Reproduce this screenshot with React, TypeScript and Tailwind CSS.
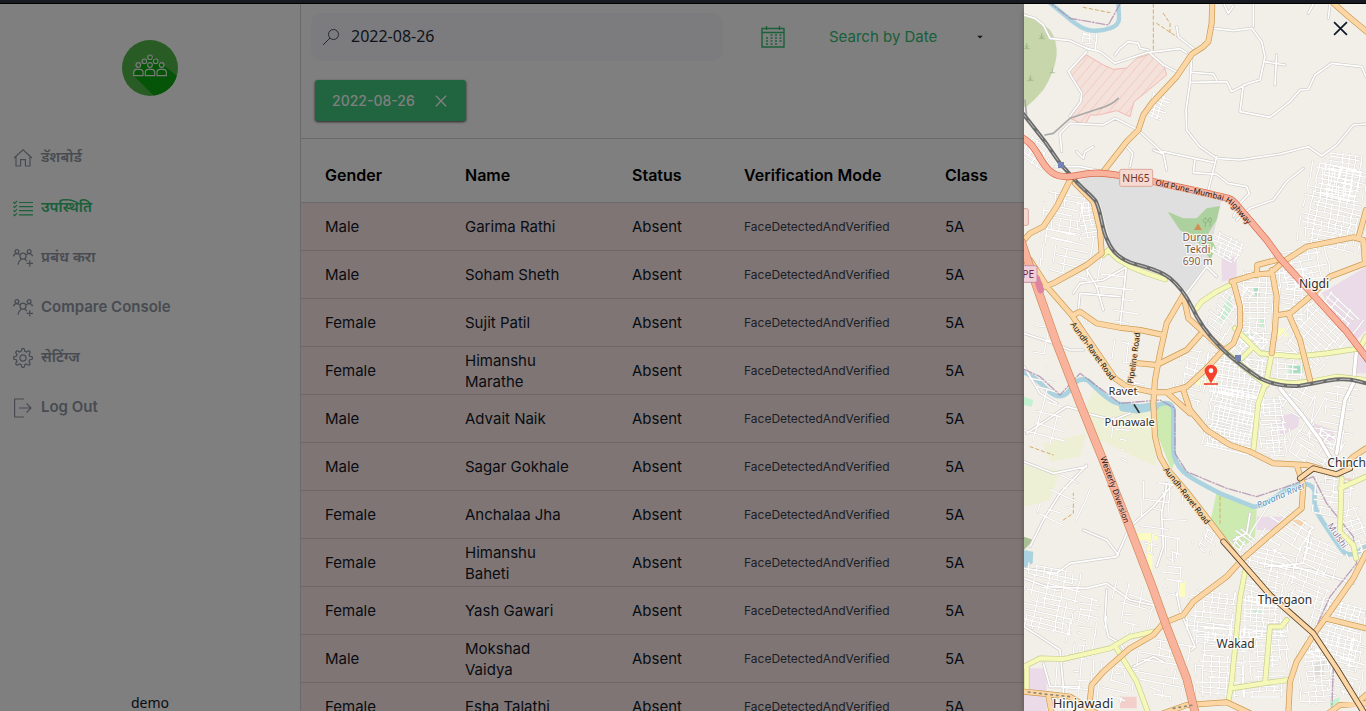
import React from "react";
import { SlSettings } from "react-icons/sl";

type IconProps = { className?: string };

function HomeIcon({ className }: IconProps) {
  return (
    <svg viewBox="0 0 20 20" fill="none" stroke="currentColor" strokeWidth="1.2" className={className} aria-hidden="true">
      <path d="M1 10 10 1.8 19 10M3 8.5V18h4.6v-6.4h4.8V18H17V8.5" />
    </svg>
  );
}

function ListIcon({ className }: IconProps) {
  return (
    <svg viewBox="0 0 20 20" fill="none" stroke="currentColor" strokeWidth="1.2" className={className} aria-hidden="true">
      <path d="M6 4.5h14M6 8.6h14M6 12.7h14M6 16.8h14" />
      <path d="m.4 4.2 1.2 1.2L4 3M.4 8.3l1.2 1.2L4 7.1M.4 12.4l1.2 1.2L4 11.2M.4 16.5l1.2 1.2L4 15.3" />
    </svg>
  );
}

function PeopleIcon({ className }: IconProps) {
  return (
    <svg viewBox="0 0 20 20" fill="none" stroke="currentColor" strokeWidth="1.3" className={className} aria-hidden="true">
      <circle cx="3.9" cy="3.6" r="1.9" />
      <circle cx="16.1" cy="3.6" r="1.9" />
      <circle cx="10" cy="8.2" r="3" />
      <path d="M.5 8.4C.7 6.5 2 5.6 3.9 5.6c1.100 0 2 .3 2.800 1.300M19.500 8.400c-.2-1.900-1.500-2.800-3.400-2.800-1.100 0-2 .3-2.800 1.300M5 16.600c.2-2.800 1.500-4.200 3.200-5.400M11.800 11.200c.9.600 1.500 1.100 2 1.900M16.800 12.200v6.400M13.600 15.400H20" />
    </svg>
  );
}

function LogoutIcon({ className }: IconProps) {
  return (
    <svg viewBox="0 0 20 20" fill="none" stroke="currentColor" strokeWidth="1.2" className={className} aria-hidden="true">
      <path d="M11 1H1.600v18H11M6 10h12M13.500 5.500 18 10l-4.500 4.500" />
    </svg>
  );
}

function CalendarIcon({ className }: IconProps) {
  return (
    <svg viewBox="0 0 24 22" fill="none" stroke="currentColor" strokeWidth="1.400" className={className} aria-hidden="true">
      <path d="M1 2.500h22V21H1zM1 6.500h22M5.500 0v4M18.500 0v4" />
      <path strokeWidth="1.600" strokeDasharray="2 2.500" d="M9.500 9h12M5 12h16M5 15h16M5 18h12" />
    </svg>
  );
}

function CloseIcon({ className }: IconProps) {
  return (
    <svg viewBox="0 0 14 14" fill="none" stroke="currentColor" strokeWidth="1.600" className={className} aria-hidden="true">
      <path d="m1 1 12 12M13 1 1 13" />
    </svg>
  );
}

function Logo({ className }: IconProps) {
  return (
    <svg viewBox="0 0 168 168" className={className} role="img" aria-label="Attendance">
      <defs>
        <clipPath id="logo-disc">
          <circle cx="84" cy="84" r="84" />
        </clipPath>
      </defs>
      <g clipPath="url(#logo-disc)">
        <rect width="168" height="168" fill="#52b848" />
        <path d="M34 106 100 172H180V120L90 48 50 78z" fill="#0ca80e" />
        <g fill="none" stroke="#f4f4f4" strokeWidth="3.500">
          <circle cx="84" cy="52" r="7" />
          <circle cx="67" cy="64" r="7" />
          <circle cx="101" cy="64" r="7" />
          <circle cx="49" cy="75" r="7" />
          <circle cx="84" cy="75" r="7" />
          <circle cx="119" cy="75" r="7" />
          <path d="M35 107V97q0-9 9-9h10q9 0 9 9v10zM70 107V97q0-9 9-9h10q9 0 9 9v10zM105 107V97q0-9 9-9h10q9 0 9 9v10z" />
        </g>
      </g>
    </svg>
  );
}

/* ---------- Map ---------- */

type Patch = [x: number, y: number, w: number, h: number, angle: number, step: number, fill: number];

const patches: Patch[] = [
  [945, 620, 190, 240, 12, 14, 0.8],
  [960, 530, 110, 140, 8, 12, 0.8],
  [415, 320, 60, 70, 20, 11, 0.8],
  [205, 125, 40, 50, 5, 13, 0.7],
  [130, 650, 130, 140, 10, 19, 0.6],
  [205, 660, 70, 110, -8, 13, 0.7],
  [50, 460, 80, 70, 35, 13, 0.7],
  [155, 760, 180, 120, 12, 24, 0.5],
  [620, 740, 110, 60, 25, 12, 0.7],
  [850, 800, 180, 110, -12, 18, 0.7],
  [610, 935, 100, 200, 35, 15, 0.7],
  [710, 930, 90, 230, 2, 15, 0.8],
  [820, 880, 90, 150, 3, 15, 0.7],
  [905, 990, 160, 210, 42, 17, 0.8],
  [690, 1040, 120, 90, 40, 15, 0.7],
  [800, 1110, 110, 110, 3, 16, 0.7],
  [510, 1130, 90, 160, 12, 18, 0.6],
  [650, 1130, 190, 120, 8, 11, 0.85],
  [640, 1260, 160, 180, 12, 10, 0.85],
  [760, 1280, 90, 170, -6, 12, 0.7],
  [840, 1200, 140, 90, 30, 22, 0.6],
  [940, 1250, 130, 190, 8, 22, 0.5],
  [890, 1340, 140, 110, 30, 18, 0.5],
  [80, 1250, 150, 160, 15, 34, 0.45],
  [80, 1060, 140, 160, 10, 40, 0.3],
  [280, 900, 160, 150, 5, 34, 0.3],
  [330, 1090, 120, 120, 10, 28, 0.4],
  [330, 1320, 120, 120, 8, 30, 0.4],
  [130, 1500, 120, 130, 25, 26, 0.4],
  [430, 1560, 140, 220, 5, 26, 0.4],
  [560, 1620, 70, 60, 30, 14, 0.6],
  [665, 1620, 70, 60, 35, 14, 0.7],
  [90, 1800, 170, 190, 12, 15, 0.65],
  [190, 1880, 90, 180, 10, 18, 0.5],
  [330, 1830, 130, 150, 15, 28, 0.4],
  [460, 1720, 90, 130, 8, 21, 0.4],
  [580, 1850, 160, 150, 5, 15, 0.7],
  [740, 1730, 170, 170, 12, 15, 0.75],
  [880, 1720, 130, 200, 20, 16, 0.75],
  [790, 1600, 170, 130, 32, 20, 0.5],
  [730, 1850, 150, 120, 3, 12, 0.8],
  [600, 1980, 150, 220, 3, 16, 0.7],
  [740, 1990, 150, 200, -3, 15, 0.7],
  [950, 1890, 170, 170, 15, 13, 0.8],
  [890, 2030, 110, 160, -5, 15, 0.7],
  [990, 2000, 110, 170, 12, 16, 0.6],
  [940, 1480, 120, 130, 8, 18, 0.6],
  [1000, 1600, 90, 150, -20, 16, 0.6],
  [430, 2010, 170, 170, 10, 20, 0.5],
  [300, 2050, 130, 110, 8, 24, 0.5],
  [160, 2030, 110, 130, 5, 24, 0.4],
];

/** Builds a jittered street grid as one path, repeatable for a given patch. */
function streetGrid([cx, cy, w, h, angle, step, fill]: Patch): string {
  let seed = (cx * 73 + cy * 19 + step) % 2147483647;
  const rnd = () => {
    seed = (seed * 16807) % 2147483647;
    return seed / 2147483647;
  };
  const a = (angle * Math.PI) / 180;
  const pt = (x: number, y: number) =>
    `${Math.round(cx + x * Math.cos(a) - y * Math.sin(a))} ${Math.round(cy + x * Math.sin(a) + y * Math.cos(a))}`;
  let d = "";
  for (let y = -h / 2; y <= h / 2; y += step) {
    const from = -w / 2 + rnd() * w * (1 - fill) * 1.1;
    const to = w / 2 - rnd() * w * (1 - fill) * 1.1;
    d += `M${pt(from, y + rnd() * 5)}L${pt(to, y + rnd() * 9)}`;
  }
  for (let x = -w / 2; x <= w / 2; x += step * 1.5) {
    for (let y = -h / 2; y < h / 2; y += step * 2) {
      if (rnd() < fill) d += `M${pt(x + rnd() * 4, y)}L${pt(x + rnd() * 7, Math.min(h / 2, y + step * 2))}`;
    }
  }
  return d;
}

const streets = patches.map(streetGrid).join("");

const lanes = [
  "M12 45 45 55 70 75 90 115 150 122 200 145 240 155 285 190 380 158 480 146 500 158",
  "M285 165 300 145 325 125 355 130 360 145 385 150M390 160 430 195 475 218M470 80 475 110 520 145",
  "M200 155 145 215 185 280 182 305 150 348M125 455 120 400 150 370 250 375 285 355 355 390 430 460 440 510",
  "M515 170 510 250 498 330 500 390 540 440 590 475 660 480 780 462 865 440 905 468 950 435 1000 375 1038 372",
  "M580 85 640 92 695 85 725 125 735 170 720 240 685 250 635 275 620 245 515 247M515 217 580 222 590 240M700 12 700 80M612 12 625 40 640 18",
  "M670 255 660 335 750 352 810 305 840 270 865 268 885 225 935 190 1025 200 1038 230",
  "M735 185 795 195M770 165 765 255M430 455 580 487M590 470 565 570M525 480 520 518 590 523 625 550 680 560 688 580 660 610 640 650",
  "M850 505 800 545 760 600 690 625 650 660M865 40 880 12M930 12 925 55",
  "M105 500 180 500 250 515M320 440 338 460 330 500M170 455 190 475 195 455 220 440M400 450 430 462",
  "M320 790 300 980M160 880 180 850 250 840 320 800M175 930 180 880 300 890M200 810 230 860 250 930M500 880 560 800 590 830",
  "M12 1000 100 1030 150 1050 190 1050M12 1100 60 1180 110 1210M20 1300 140 1220 200 1235M200 1240 280 1260 330 1240",
  "M200 1395 120 1480 70 1560 30 1640M12 1705 110 1720 150 1690 290 1670 330 1580 400 1520 470 1440",
  "M295 1665 260 1620 190 1590M440 1450 425 1540 430 1640 410 1700M12 1735 80 1760 200 1765 260 1750 330 1800 420 1820",
  "M12 1880 60 1910 120 1950 130 2060 130 2130M260 1770 255 1860 265 1910 300 1930 320 1960M470 1780 480 1830 525 1940 515 1950",
  "M690 1540 680 1600 640 1620M870 1590 850 1690 740 1700M720 1690 870 1710 1000 1750",
  "M12 1385 100 1420 200 1400M340 2000 400 1970 430 1985M70 1990 90 2060 180 2060",
];

const mainLanes = ["M780 1165 850 1250 900 1320 935 1380", "M1010 1045 1000 1150 975 1200 950 1360"];

const yellowRoads = [
  "M250 765 265 750 290 775 330 800 380 820 435 838",
  "M530 925 545 905 590 875 640 850",
  "M605 1045 670 1100 740 1155",
  "M645 985 720 1060 830 1070 920 1060 1020 1045 1038 1010",
  "M755 1060 740 1140 715 1210 700 1350",
  "M740 1140 810 1150 870 1145 950 1130 1038 1140",
  "M665 1075 700 1040",
  "M12 2000 60 1975 130 1977 270 1945 330 1910 400 1895M20 2000 20 2075",
  "M290 1945 350 2045 385 2140",
  "M675 1715 660 1795 645 1945 635 2045 625 2105",
  "M635 2065 730 2050 805 2040M735 2050 750 1880 785 1880 800 1860",
  "M965 1435 960 1595 1000 1635 1008 1675M960 1465 1038 1430",
];

const orangeRoads = [
  "M577 0 575 70 565 125 550 140 515 163 470 230 395 310 370 345 355 390 320 425 250 515",
  "M930 0 980 45 1040 95",
  "M150 540 110 620 70 680 30 700 12 720",
  "M165 550 220 605 240 690 245 760 200 795 100 850 75 860",
  "M30 780 85 865 155 945 285 1135 320 1160 400 1177 440 1177 500 1160 560 1105 610 1050",
  "M160 945 180 935 230 970 300 983 360 990 430 1005",
  "M355 1090 410 1095 500 1050 540 1005",
  "M490 885 440 970 420 1060 405 1140 400 1210 405 1310 420 1370 440 1405 500 1475 570 1565 650 1670 750 1785 880 1900 950 2005 1030 2135",
  "M490 885 505 955 610 1050",
  "M440 1177 510 1240M490 1170 510 1230 560 1290 630 1335 690 1355 760 1390 860 1395 900 1405",
  "M640 845 660 920 660 980 640 1030 620 1045",
  "M635 845 700 825 750 820 790 785 860 740 1000 712 1030 720 1035 790 930 830 870 890 810 940 775 945M710 825 712 795 770 780M1015 715 1038 630",
  "M755 810 770 890 765 990 755 1060",
  "M805 940 840 1020 870 1140",
  "M830 1395 850 1455 845 1525 750 1605 670 1675 620 1730 520 1805 490 1845 430 1870 400 1905 330 1945 250 2015 215 2055 205 2140",
  "M1038 1660 1000 1735 930 1835 880 1905 830 1985 810 2045 805 2140",
  "M915 1855 1038 1885",
  "M12 2075 80 2082 150 2090 230 2140M85 2085 95 2140M430 2140 500 2115 620 2107 690 2140",
  "M840 1435 880 1405 950 1423 990 1405M1038 1345 1000 1370 970 1400",
  "M925 2140 960 2115 1038 2110M1010 2110 1038 2085",
];

const darkEdged = "M610 1625 650 1670 750 1785 880 1900 950 2005 1030 2135M840 1435 880 1405 950 1423 990 1405";

const railway =
  "M0 330 20 355 75 425 120 490 165 540C190 570 215 585 228 605C245 640 245 690 262 720C275 755 300 775 330 787C370 800 420 810 450 835C480 860 500 890 515 920C540 975 570 1010 600 1040C620 1062 680 1110 720 1135C760 1155 800 1160 840 1157C880 1152 920 1140 960 1138S1010 1144 1040 1150";
const nationalHighway =
  "M0 410C40 430 45 450 65 482S105 532 145 530C180 527 200 519 230 519C290 522 350 535 400 545C480 562 560 578 625 595Q640 600 655 620L740 720 780 775 880 885 980 995 1045 1080";
const expressway = "M4 725 50 860 110 1030 180 1210 255 1395 330 1585 395 1755 438 1875 500 2035 527 2145";
const river =
  "M0 1115C40 1122 60 1150 85 1172S130 1195 150 1170C165 1145 180 1130 205 1142C230 1165 250 1190 280 1205S390 1225 430 1210C462 1205 462 1230 460 1260V1350C462 1380 475 1400 490 1415S560 1460 600 1480L700 1520C730 1525 780 1475 810 1465Q870 1435 885 1475C880 1510 885 1530 905 1560S950 1630 970 1655C990 1675 1020 1655 1038 1635";
const boundary =
  "M80 0 150 55 265 75 300 12M12 1108 60 1130 120 1185 180 1120 300 1210 420 1200 465 1225 465 1360 500 1415 620 1465 710 1490 800 1460 880 1430 920 1510 1000 1610 1010 1690 930 1790 880 1900 940 2000 935 2140";

function Roads({ paths, casing, fill, width }: { paths: string[]; casing: string; fill: string; width: number }) {
  const d = paths.join("");
  return (
    <g>
      <path d={d} stroke={casing} strokeWidth={width + 4} />
      <path d={d} stroke={fill} strokeWidth={width} />
    </g>
  );
}

function MapView() {
  return (
    <svg viewBox="12 12 1026 2121" preserveAspectRatio="xMinYMin slice" className="block size-full bg-[#f2efe9]" role="img" aria-label="Map of Nigdi, Ravet and Wakad">
      <defs>
        <pattern id="hatch" width="22" height="22" patternUnits="userSpaceOnUse" patternTransform="rotate(40)">
          <rect width="22" height="22" fill="#f3e1da" />
          <path d="M0 0V22" stroke="#f4c4be" strokeWidth="4" />
        </pattern>
        <path id="highway-label" d="M405 555 520 580 600 599Q625 605 640 624L700 693 760 765" />
      </defs>
      <rect x="12" y="12" width="1026" height="2121" fill="#f2efe9" />

      <g>
        <path d="M12 50Q50 50 90 90Q112 120 110 165Q105 215 70 270Q45 300 20 320H12z" fill="#c8d7ab" />
        <path d="M200 165 250 195 280 208 320 204 350 175 390 162 430 190 440 225 380 275 342 305 330 350 290 332 235 345 210 345 195 375 150 355 185 305 182 270 145 215z" fill="url(#hatch)" stroke="#f4b9b4" strokeWidth="3" />
        <path d="M170 545 230 520 400 545 605 600 560 790 500 875 450 830 330 785 275 740 240 610z" fill="#dfdfdf" />
        <path d="M443 635 490 655 530 655 560 625 600 618 590 660 565 700 588 745 570 780 550 740 510 710 480 690z" fill="#add19e" />
        <path d="M605 770H650V835L605 845z M905 880 1038 800V990L1000 1030z M780 1245 840 1240 835 1280 780 1310z M870 1265 940 1290 945 1320 910 1325z M1010 1060H1038V1120H1010z M12 2005H80V2140H12z M710 1550H790L760 1590 710 1590z" fill="#ebdbe8" />
        <path d="M225 1160 280 1210 380 1225 400 1260 410 1400 320 1360 200 1300 190 1240z M12 1395 120 1410 90 1500 12 1520z M70 1330 200 1300 180 1370 90 1385z" fill="#eef0d5" />
        <path d="M410 1220 460 1210 465 1380 455 1410 410 1300z M590 1475 710 1530 705 1610 660 1650 570 1570z" fill="#cdebb0" />
        <path d="M595 945 635 880 635 930 620 955 600 965z M700 860H720V890H700z M805 1095H850V1120H805z M720 955H735V980H720z M12 1190 40 1200 35 1220 12 1215z M700 1830 725 1828 720 1845 700 1845z M930 2105 960 2090 955 2110 930 2120z M660 985 700 1005 690 1025z" fill="#c3f2d1" />
        <path d="M703 862H718V885H703z M812 1098H840V1118H812z" fill="#a4dcc4" />
        <path d="M530 1130 570 1110 600 1090 590 1160 530 1155z M770 985H800V1010H770z M345 1600H412V1620H345z M385 1620H397V1710H380z M475 1745H495V1790H475z" fill="#fcfbc0" />
        <path d="M12 1650 40 1655 38 1690 12 1705z" fill="#aad3df" />
        <path d="M12 1610 40 1620 12 1650z" fill="#a9bf95" />
        <path d="M820 1560H855V1577H820z" fill="#f7d3ac" />
        <path d="M300 2090H350V2125H300z M970 1435H995V1450H970z" fill="#f3cfcb" />
        <path d="M885 1990 915 1980 910 2030 885 2035z" fill="#dfdcdc" />
      </g>

      <g fill="none" strokeLinejoin="round" strokeLinecap="round">
        <path d="M85 5 140 50Q185 90 215 92T270 85Q300 75 297 50L295 12" stroke="#aad3df" strokeWidth="13" />
        <path d={river} stroke="#aad3df" strokeWidth="14" />
        <path d="M310 1222 350 1228 405 1218" stroke="#aad3df" strokeWidth="26" />
        <path d="M400 12 400 150M410 70 470 110M430 40 450 70 450 100M190 22 270 38M600 1490 600 1570M130 1560 160 1540 160 1480M30 1340 100 1365" stroke="#d3ad6a" strokeWidth="3" strokeDasharray="10 8" />
        <path d={streets} stroke="#d3d0cc" strokeWidth="6" />
        <Roads paths={lanes} casing="#cfccc8" fill="#ffffff" width={5} />
        <path d={streets} stroke="#ffffff" strokeWidth="4" />
        <Roads paths={mainLanes} casing="#c9c6c2" fill="#ffffff" width={10} />
        <path d={boundary} stroke="#a887a9" strokeOpacity="0.75" strokeWidth="4" strokeDasharray="26 6 4 6" />
        <path d="M15 300 20 350M75 405 100 400 150 355 240 325Q275 315 295 295" stroke="#a9a9a9" strokeWidth="5" />
        <Roads paths={yellowRoads} casing="#c6cf8c" fill="#f5f8b9" width={13} />
        <Roads paths={orangeRoads} casing="#c99a52" fill="#fcd6a4" width={14} />
        <path d={railway} stroke="#6c6c6c" strokeWidth="12" />
        <path d={railway} stroke="#e9e9e9" strokeWidth="2" strokeDasharray="30 10" strokeLinecap="butt" />
        <Roads paths={[nationalHighway]} casing="#d9694c" fill="#f9b29c" width={17} />
        <Roads paths={[expressway]} casing="#d08a55" fill="#f9b29c" width={22} />
        <path d={darkEdged} stroke="#5d4a36" strokeWidth="18" />
        <path d={darkEdged} stroke="#fcd6a4" strokeWidth="13" />
        <path d="M25 2076 80 2083 150 2090M460 2125 520 2115" stroke="#8f8878" strokeWidth="5" strokeDasharray="5 12" />
        <path d="M343 1215 357 1237" stroke="#333333" strokeWidth="5" />
        <path d="M50 835 62 870" stroke="#e083a0" strokeWidth="20" />
        <path d="M56 116H74M60 108 65 116 65 100 65 116 71 108M11 146H29M15 138 20 146 20 130 20 146 26 138M22 242H40M26 234 31 242 31 226 31 242 37 234M90 218H104M97 216V204" stroke="#9cb384" strokeWidth="2" />
        <path d="M556 655a6 7 0 1 0 .1 0zM556 669V680M570 654a5 6 0 1 0 .1 0zM570 667V678" stroke="#7fa870" strokeWidth="2" />
      </g>

      <path d="M534 670 546 690H522z" fill="#d08f55" />
      <path d="M114 486h18v18h-18zM645 1065h18v18h-18z" fill="#7381b5" />

      <g stroke="#dba79a" strokeWidth="3" fill="#f6d9d1">
        <rect x="299" y="508" width="99" height="51" rx="5" />
        <rect x="-10" y="626" width="35" height="50" rx="5" />
        <rect x="-20" y="797" width="71" height="50" rx="5" fill="#efd0d8" stroke="#c98ea0" />
      </g>

      <g fontFamily="'Noto Sans', sans-serif" stroke="#ffffff" strokeOpacity="0.8" paintOrder="stroke" strokeLinejoin="round" textAnchor="middle" fill="#2f2f2f">
        <g stroke="none" fontSize="31">
          <text x="348" y="545" fill="#703527">NH65</text>
          <text x="25" y="833" fill="#7a1f3d">PE</text>
        </g>
        <g fontSize="31" strokeWidth="7" fill="#8a5a3c">
          <text x="533" y="723">Durga</text>
          <text x="533" y="759">Tekdi</text>
          <text x="533" y="795">690 m</text>
        </g>
        <g fontSize="36" strokeWidth="8">
          <text x="882" y="864">Nigdi</text>
          <text x="795" y="1813">Thergaon</text>
          <text x="647" y="1943">Wakad</text>
          <text x="189" y="2123" fontSize="39">Hinjawadi</text>
          <text x="922" y="1402" textAnchor="start">Chinchwad</text>
        </g>
        <g fontSize="33" strokeWidth="8">
          <text x="309" y="1185">Ravet</text>
          <text x="329" y="1277">Punawale</text>
        </g>
        <g fontSize="24" stroke="#fcd6a4" strokeWidth="5" fill="#151515">
          <text stroke="#f9b29c" textAnchor="start">
            <textPath href="#highway-label">Old Pune–Mumbai Highway</textPath>
          </text>
          <text transform="translate(212 1058) rotate(54)">Aundh-Ravet Road</text>
          <text transform="translate(350 1075) rotate(-82)">Pipeline Road</text>
          <text transform="translate(277 1472) rotate(70)" stroke="#f9b29c">Westerly Diversion</text>
          <text transform="translate(494 1492) rotate(52)">Aundh-Ravet Road</text>
        </g>
        <g fontSize="27" strokeWidth="5">
          <text transform="translate(787 1494) rotate(-24)" fill="#5b93b8" fontStyle="italic">Pavana River</text>
          <text transform="translate(945 1612) rotate(56)" fill="#96789a">Mulshi</text>
        </g>
      </g>

      <g>
        <path d="M573 1146C566 1130 554 1118 554 1108a19 19 0 0 1 38 0c0 10-12 22-19 38z" transform="translate(0 5)" fill="#f4402f" />
        <circle cx="573" cy="1112" r="7" fill="#ffffff" />
        <path d="M552 1152H594" stroke="#f4402f" strokeWidth="5" />
      </g>
    </svg>
  );
}

/* ---------- Page ---------- */

const navItems = [
  { label: "डॅशबोर्ड", icon: HomeIcon, active: false },
  { label: "उपस्थिति", icon: ListIcon, active: true },
  { label: "प्रबंध करा", icon: PeopleIcon, active: false },
  { label: "Compare Console", icon: PeopleIcon, active: false },
  { label: "सेटिंग्ज", icon: SlSettings, active: false },
  { label: "Log Out", icon: LogoutIcon, active: false },
];

const students = [
  ["Male", "Garima Rathi"],
  ["Male", "Soham Sheth"],
  ["Female", "Sujit Patil"],
  ["Female", "Himanshu Marathe"],
  ["Male", "Advait Naik"],
  ["Male", "Sagar Gokhale"],
  ["Female", "Anchalaa Jha"],
  ["Female", "Himanshu Baheti"],
  ["Female", "Yash Gawari"],
  ["Male", "Mokshad Vaidya"],
  ["Female", "Esha Talathi"],
];

function Sidebar() {
  return (
    <aside className="flex w-[301px] shrink-0 flex-col border-r border-gray-300">
      <Logo className="mt-9 size-14 self-center" />
      <nav className="mt-9 flex flex-1 flex-col">
        {navItems.map(({ label, icon: Icon, active }) => (
          <a
            key={label}
            href="#"
            className={`flex h-[50px] items-center gap-2 pl-[13px] text-[15px] font-semibold ${active ? "text-[#34c073]" : "text-[#9097a5]"}`}
          >
            <Icon className="mt-0.5 size-5 shrink-0" />
            <span>{label}</span>
          </a>
        ))}
      </nav>
      <p className="text-center font-['Noto_Sans',sans-serif] text-sm leading-4 text-gray-900">demo</p>
    </aside>
  );
}

function Toolbar() {
  return (
    <div className="border-b border-gray-300">
      <div className="flex items-center pt-[9px] pl-[10px]">
        <label className="flex h-12 w-[412px] shrink-0 items-center gap-3 rounded-[10px] bg-[#f8f8fc] px-3 text-gray-600">
          <svg viewBox="0 0 16 16" fill="none" stroke="currentColor" strokeWidth="1" className="size-4 shrink-0" aria-hidden="true">
            <circle cx="10.500" cy="5.500" r="5" />
            <path d="M7 9 0 16" />
          </svg>
          <span className="sr-only">Search</span>
          <input type="text" defaultValue="2022-08-26" className="h-full min-w-0 flex-1 bg-transparent pb-0.5 font-['Noto_Sans',sans-serif] text-base text-gray-800 outline-none" />
        </label>
        <CalendarIcon className="ml-[38px] h-[22px] w-6 shrink-0 text-[#34c073]" />
        <div className="relative ml-11 shrink-0">
          <select aria-label="Search by Date" className="block w-[160px] appearance-none bg-transparent text-[15px] text-[#34c073] outline-none">
            <option>Search by Date</option>
          </select>
          <svg viewBox="0 0 6 3" className="pointer-events-none absolute top-1/2 right-[6px] h-[3px] w-[6px] -translate-y-1/2 text-gray-800" aria-hidden="true">
            <path d="M0 0h6L3 3z" fill="currentColor" />
          </svg>
        </div>
      </div>
      <div className="flex pt-[19px] pb-[17px] pl-[14px]">
        <button type="button" className="flex h-[41px] items-center gap-5 rounded-[3px] bg-[#40ca7e] pr-[19px] pl-[17px] text-sm font-medium text-white shadow-sm shadow-black/60">
          2022-08-26
          <CloseIcon className="size-3" />
        </button>
      </div>
    </div>
  );
}

function AttendanceTable() {
  return (
    <table className="w-full table-fixed border-separate border-spacing-0 text-left text-gray-900">
      <colgroup>
        <col className="w-[140px]" />
        <col className="w-[167px]" />
        <col className="w-[112px]" />
        <col className="w-[201px]" />
        <col />
      </colgroup>
      <thead>
        <tr className="h-16 text-base whitespace-nowrap text-black">
          {["Gender", "Name", "Status", "Verification Mode", "Class"].map((h) => (
            <th key={h} className="border-b border-gray-300 pt-2 pl-6 font-semibold">
              {h}
            </th>
          ))}
        </tr>
      </thead>
      <tbody>
        {students.map(([gender, name]) => (
          <tr key={name} className="h-12 bg-[#ffebe9] text-[15px] leading-[21px]">
            <td className="border-b border-[#dfcccb] pl-6">{gender}</td>
            <td className="border-b border-[#dfcccb] pr-8 pl-6">{name}</td>
            <td className="border-b border-[#dfcccb] pl-6">Absent</td>
            <td className="border-b border-[#dfcccb] pl-6 text-xs text-gray-700">FaceDetectedAndVerified</td>
            <td className="border-b border-[#dfcccb] pl-6">5A</td>
          </tr>
        ))}
      </tbody>
    </table>
  );
}

export default function App() {
  return (
    <div className="flex h-screen flex-col overflow-hidden bg-white font-[Inter,'Noto_Sans',sans-serif]">
      <div className="h-1 shrink-0 border-b border-black bg-[#171b21]" />
      <div className="relative flex min-h-0 flex-1">
        <Sidebar />
        <main className="min-w-0 flex-1 overflow-hidden">
          <Toolbar />
          <AttendanceTable />
        </main>
        <div className="absolute inset-0 bg-black/50" />
        <section aria-label="Location" className="absolute inset-y-0 right-0 w-[342px] shadow-md shadow-black/30">
          <MapView />
          <button type="button" aria-label="Close" className="absolute top-[11px] right-[12px] flex size-[27px] items-center justify-center text-gray-900">
            <CloseIcon className="size-[15px]" />
          </button>
        </section>
      </div>
    </div>
  );
}
